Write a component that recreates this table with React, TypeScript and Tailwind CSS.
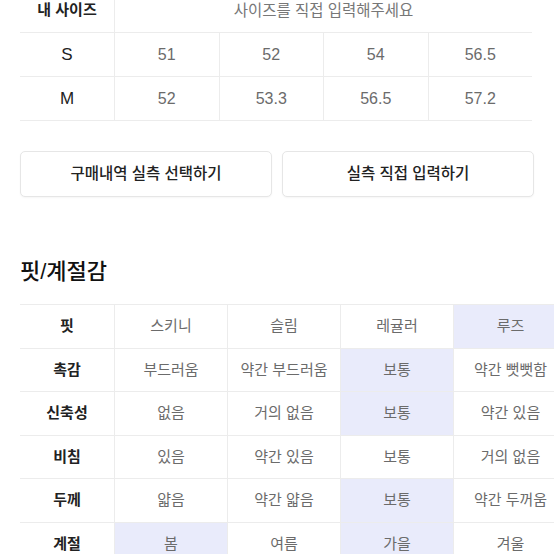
const sizes = [
  { label: "S", values: ["51", "52", "54", "56.5"] },
  { label: "M", values: ["52", "53.3", "56.5", "57.2"] },
];

const fits = [
  { label: "핏", values: ["스키니", "슬림", "레귤러", "루즈"], on: [3] },
  { label: "촉감", values: ["부드러움", "약간 부드러움", "보통", "약간 뻣뻣함"], on: [2] },
  { label: "신축성", values: ["없음", "거의 없음", "보통", "약간 있음"], on: [2] },
  { label: "비침", values: ["있음", "약간 있음", "보통", "거의 없음"], on: [] as number[] },
  { label: "두께", values: ["얇음", "약간 얇음", "보통", "약간 두꺼움"], on: [2] },
  { label: "계절", values: ["봄", "여름", "가을", "겨울"], on: [0, 2] },
];

export default function App() {
  return (
    <div
      className="h-[554px] w-[554px] overflow-hidden bg-white"
      style={{ fontFamily: '"Liberation Sans", "Noto Sans CJK KR", sans-serif' }}
    >
      {/* My size table */}
      <div className="-mt-[11px] ml-5 w-[512px] text-[15px]">
        <div className="flex h-[44px] border-b border-[#ececec]">
          <div className="flex w-[95px] items-center justify-center border-r border-[#ececec] font-semibold text-[#222]">
            내 사이즈
          </div>
          <div className="flex flex-1 items-center justify-center text-[15.5px] text-[#777]">
            사이즈를 직접 입력해주세요
          </div>
        </div>
        {sizes.map((row) => (
          <div key={row.label} className="flex h-[44px] border-b border-[#ececec]">
            <div className="flex w-[95px] items-center justify-center border-r border-[#ececec] text-[17px] font-medium text-[#222]">
              {row.label}
            </div>
            {row.values.map((v, i) => (
              <div
                key={i}
                className={`flex flex-1 items-center justify-center text-[16px] text-[#6b6b6b] ${i < 3 ? "border-r border-[#ececec]" : ""}`}
              >
                {v}
              </div>
            ))}
          </div>
        ))}
      </div>

      {/* Buttons */}
      <div className="mx-5 mt-[30px] flex gap-[10px]">
        <button className="h-[46px] flex-1 rounded-[5px] border border-[#e6e6e6] bg-white text-[15.5px] font-medium text-[#222] shadow-[0_1px_2px_rgba(0,0,0,0.04)]">
          구매내역 실측 선택하기
        </button>
        <button className="h-[46px] flex-1 rounded-[5px] border border-[#e6e6e6] bg-white text-[15.5px] font-medium text-[#222] shadow-[0_1px_2px_rgba(0,0,0,0.04)]">
          실측 직접 입력하기
        </button>
      </div>

      {/* Fit / season */}
      <h2 className="ml-5 mt-[60px] text-[22px] font-medium leading-[30px] text-[#111]">핏/계절감</h2>

      <div className="ml-5 mt-[17px] w-[547px] border-t border-[#ececec] text-[15px]">
        {fits.map((row) => (
          <div key={row.label} className="flex h-[43.5px] border-b border-[#ececec]">
            <div className="flex w-[95px] shrink-0 items-center justify-center border-r border-[#ececec] font-semibold text-[#222]">
              {row.label}
            </div>
            {row.values.map((v, i) => (
              <div
                key={i}
                className={`flex w-[113px] shrink-0 items-center justify-center whitespace-nowrap text-[#6b6b6b] ${i < 3 ? "border-r border-[#ececec]" : ""} ${row.on.includes(i) ? "bg-[#e9ebfb]" : "bg-white"}`}
              >
                {v}
              </div>
            ))}
          </div>
        ))}
      </div>
    </div>
  );
}
